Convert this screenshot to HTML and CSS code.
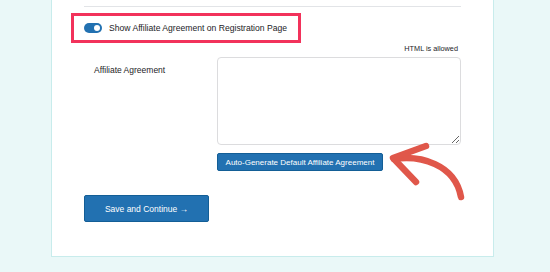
FILE: index.html
```html
<!DOCTYPE html>
<html lang="en">
<head>
<meta charset="utf-8">
<title>Affiliate Agreement Settings</title>
<link rel="stylesheet" href="styles.css">
</head>
<body>
<div class="card">
  <div class="divider"></div>
  <div class="toggle-row">
    <span class="toggle"><span class="knob"></span></span>
    <span class="toggle-label">Show Affiliate Agreement on Registration Page</span>
  </div>
  <div class="field-row">
    <div class="field-label">Affiliate Agreement</div>
    <div class="field-control">
      <div class="hint">HTML is allowed</div>
      <textarea class="agreement"></textarea>
      <div class="actions">
        <button class="btn btn-small">Auto-Generate Default Affiliate Agreement</button>
      </div>
    </div>
  </div>
  <div class="footer">
    <button class="btn btn-large">Save and Continue &rarr;</button>
  </div>
  <svg class="arrow" width="90" height="70" viewBox="0 0 90 70">
    <path d="M9 21 C35 17 70 26 76 59" fill="none" stroke="#e0574a" stroke-width="6.5" stroke-linecap="round"/>
    <path d="M41 8 L8 20 L31 44" fill="none" stroke="#e0574a" stroke-width="6.5" stroke-linecap="round" stroke-linejoin="round"/>
  </svg>
</div>
</body>
</html>
```
FILE: styles.css
```css
html, body {
  margin: 0;
  padding: 0;
}
body {
  background: #eaf8f8;
  font-family: "Liberation Sans", Arial, sans-serif;
  color: #1d2327;
  width: 550px;
  height: 272px;
  overflow: hidden;
}
.card {
  position: relative;
  box-sizing: border-box;
  margin-left: 51px;
  width: 443px;
  height: 257px;
  background: #ffffff;
  border: 1px solid #c8ecec;
  border-top: none;
  padding: 6px 32px 0 32px;
}
.divider {
  height: 1px;
  background: #e2e4e7;
}
.toggle-row {
  display: inline-flex;
  align-items: center;
  gap: 7px;
  box-sizing: border-box;
  margin: 6px 0 0 -13px;
  width: 230px;
  height: 30px;
  border: 3px solid #f2325b;
  padding-left: 10px;
}
.toggle {
  position: relative;
  width: 18px;
  height: 10px;
  border-radius: 5px;
  background: #2271b1;
  flex: none;
}
.knob {
  position: absolute;
  right: 2px;
  top: 2px;
  width: 6px;
  height: 6px;
  border-radius: 50%;
  background: #ffffff;
}
.toggle-label {
  font-size: 8.6px;
  color: #1d2327;
  white-space: nowrap;
}
.field-row {
  display: grid;
  grid-template-columns: 133px 244px;
  margin-top: 1px;
}
.field-label {
  font-size: 8.5px;
  padding-left: 10px;
  padding-top: 21px;
}
.hint {
  font-size: 7.3px;
  text-align: right;
  padding-right: 3px;
  height: 13px;
  line-height: 10px;
}
.agreement {
  display: block;
  box-sizing: border-box;
  width: 244px;
  height: 88px;
  margin: 0;
  border: 1px solid #dcdcde;
  border-radius: 4px;
  background: #ffffff;
  resize: vertical;
}
.actions {
  margin-top: 8px;
}
.btn {
  display: flex;
  align-items: center;
  justify-content: center;
  box-sizing: border-box;
  margin: 0;
  padding: 0;
  background: #2271b1;
  border: 1px solid #135e96;
  border-radius: 2px;
  color: #ffffff;
  font-family: "Liberation Sans", Arial, sans-serif;
}
.btn-small {
  width: 166px;
  height: 18px;
  font-size: 8px;
}
.footer {
  margin-top: 24px;
}
.btn-large {
  width: 125px;
  height: 27px;
  font-size: 8.5px;
}
.arrow {
  position: absolute;
  left: 333px;
  top: 138px;
}
```
